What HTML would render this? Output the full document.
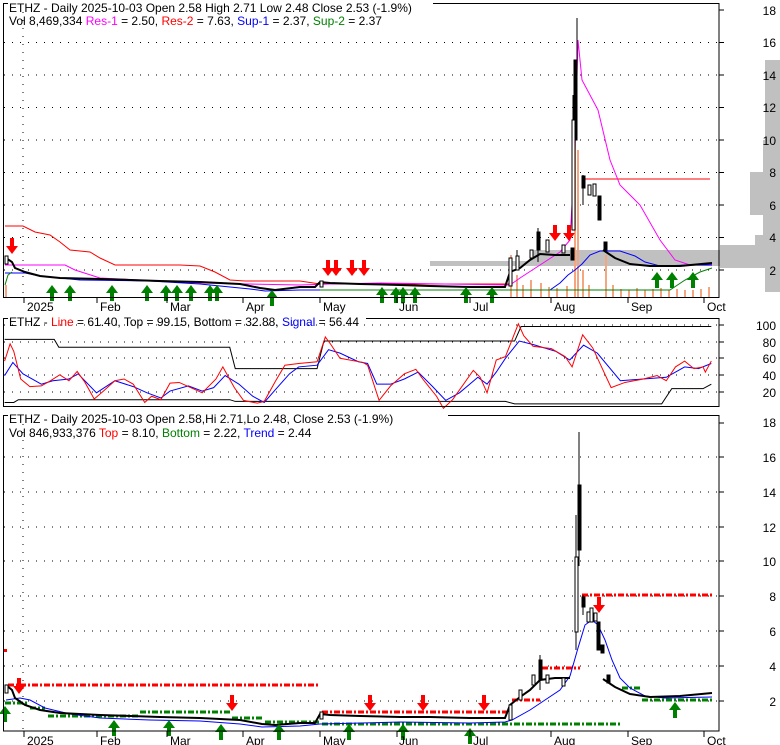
<!DOCTYPE html>
<html><head><meta charset="utf-8"><style>
html,body{margin:0;padding:0;background:#fff;}
svg{display:block;font-family:"Liberation Sans",sans-serif;font-size:12px;}
.g{stroke:#000;stroke-width:1;stroke-dasharray:1,7;fill:none}
.ns{vector-effect:non-scaling-stroke}
</style></head><body>
<svg width="780" height="745" viewBox="0 0 780 745">
<path fill="#c0c0c0" d="M765,60 H780 V292 H765 V268 H720 V245 H755 V235 H763 V215 H750 V172 H763 V140 H765 Z"/>
<path fill="#c0c0c0" d="M530,250 H720 V266 H530 Z"/>
<path fill="#c0c0c0" d="M430,261 H530 V266 H430 Z"/>
<g class="g">
<path d="M4,270H719M4,237.5H719M4,205H719M4,172.5H719M4,140H719M4,107.5H719M4,75H719M4,42.5H719"/>
<path d="M23,4V297"/>
</g>
<g fill="#f4a582">
<rect x="5" y="285" width="2" height="12"/><rect x="510" y="255" width="2" height="42"/><rect x="516" y="275" width="2" height="22"/><rect x="522" y="285" width="2" height="12"/>
<rect x="530" y="280" width="2" height="17"/><rect x="540" y="283" width="2" height="14"/><rect x="548" y="287" width="2" height="10"/><rect x="556" y="288" width="2" height="9"/>
<rect x="566" y="286" width="2" height="11"/><rect x="574" y="60" width="2" height="237"/><rect x="577" y="150" width="2" height="147"/><rect x="582" y="270" width="2" height="27"/>
<rect x="588" y="285" width="2" height="12"/><rect x="605" y="255" width="2" height="42"/><rect x="612" y="285" width="2" height="12"/>
<path d="M620,289h2v8h-2zM628,290h2v7h-2zM636,288h2v9h-2zM644,290h2v7h-2zM652,289h2v8h-2zM660,288h2v9h-2zM668,290h2v7h-2zM676,289h2v8h-2zM684,290h2v7h-2zM692,290h2v7h-2zM700,289h2v8h-2zM708,287h2v10h-2z"/>
</g>
<polyline fill="none" stroke="#f00" points="5,226 23,226 35,232 50,235 60,242 70,250 90,252 100,258 115,265 140,265 180,265 200,266 215,272 230,280 245,281 300,281 320,284 510,284"/>
<polyline fill="none" stroke="#f00" points="584,179 710,179"/>
<polyline fill="none" stroke="#f0f" points="5,265 65,265 75,270 100,278 200,283 300,285 330,284 380,283 510,285 520,278 540,265 560,252 570,240 575,150 578,40 582,80 590,95 598,110 610,160 620,185 640,205 660,240 675,260 690,265 712,264"/>
<polyline fill="none" stroke="#00f" points="5,273 25,273 40,276 80,280 150,281 200,284 250,289 265,291 300,290 510,290 550,290 560,283 568,275 575,270 582,264 590,255 600,251 620,251 635,256 645,262 660,266 690,265 712,265"/>
<polyline fill="none" stroke="#008000" points="5,285 8,275 12,272"/>
<polyline fill="none" stroke="#008000" points="320,290 470,290 540,290 670,290 685,280 700,272 712,268"/>
<polyline fill="none" stroke="#000" stroke-width="2" points="6,258 12,262 15,268 25,272 40,276 60,278 100,279 160,281 200,282 240,284 260,288 275,290 300,287 315,287 320,282 330,283 360,284 400,285 430,286 470,287 505,287 510,272 520,268 530,260 540,254 555,255 570,255"/>
<polyline fill="none" stroke="#000" stroke-width="2" points="603,250 615,258 630,264 650,266 680,266 712,263"/>
<g stroke="#000" fill="#fff">
<line x1="577" y1="18" x2="577" y2="140"/><rect x="574" y="60" width="3" height="80" fill="#000"/>
<line x1="573" y1="95" x2="573" y2="230"/><rect x="572" y="120" width="3" height="110"/>
<line x1="583" y1="175" x2="583" y2="205"/><rect x="582" y="176" width="3" height="12" fill="#000"/>
<rect x="588" y="185" width="3" height="10"/><rect x="593" y="184" width="3" height="12"/>
<rect x="598" y="196" width="3" height="24" fill="#000"/>
<line x1="538" y1="228" x2="538" y2="262"/><rect x="537" y="232" width="3" height="18" fill="#000"/>
<rect x="530" y="250" width="3" height="8"/><rect x="546" y="240" width="3" height="12"/><rect x="562" y="245" width="3" height="8"/><rect x="571" y="248" width="3" height="12" fill="#000"/>
<line x1="517" y1="250" x2="517" y2="270"/><rect x="516" y="256" width="3" height="14"/>
<rect x="509" y="258" width="3" height="28"/>
<rect x="604" y="242" width="3" height="8" fill="#000"/>
<rect x="5" y="256" width="3" height="8"/><rect x="320" y="281" width="3" height="6"/>
</g>
<g fill="#f00">
<path d="M10,238h4v8h4l-6,8l-6,-8h4z"/>
<path d="M326,260h4v8h4l-6,8l-6,-8h4z"/><path d="M334,260h4v8h4l-6,8l-6,-8h4z"/><path d="M350,260h4v8h4l-6,8l-6,-8h4z"/><path d="M362,260h4v8h4l-6,8l-6,-8h4z"/>
<path d="M553,225h4v8h4l-6,8l-6,-8h4z"/><path d="M567,225h4v8h4l-6,8l-6,-8h4z"/>
</g>
<g fill="#008000">
<path d="M52,285l6,8h-4v8h-4v-8h-4z"/>
<path d="M70,285l6,8h-4v8h-4v-8h-4z"/><path d="M112,285l6,8h-4v8h-4v-8h-4z"/><path d="M147,285l6,8h-4v8h-4v-8h-4z"/>
<path d="M166,285l6,8h-4v8h-4v-8h-4z"/><path d="M177,285l6,8h-4v8h-4v-8h-4z"/><path d="M191,285l6,8h-4v8h-4v-8h-4z"/>
<path d="M210,285l6,8h-4v8h-4v-8h-4z"/><path d="M217,285l6,8h-4v8h-4v-8h-4z"/><path d="M272,290l6,8h-4v8h-4v-8h-4z"/>
<path d="M382,287l6,8h-4v8h-4v-8h-4z"/><path d="M396,287l6,8h-4v8h-4v-8h-4z"/><path d="M403,287l6,8h-4v8h-4v-8h-4z"/><path d="M415,287l6,8h-4v8h-4v-8h-4z"/>
<path d="M466,287l6,8h-4v8h-4v-8h-4z"/><path d="M492,287l6,8h-4v8h-4v-8h-4z"/>
<path d="M657,272l6,8h-4v8h-4v-8h-4z"/><path d="M672,272l6,8h-4v8h-4v-8h-4z"/><path d="M693,272l6,8h-4v8h-4v-8h-4z"/>
</g>
<rect x="3.5" y="3.5" width="715.5" height="294" fill="none" stroke="#000"/>
<rect x="8" y="0" width="425" height="10" fill="#fff"/>
<text x="9" y="12">ETHZ - Daily 2025-10-03 Open 2.58  High 2.71  Low 2.48  Close 2.53 (-1.9%)</text>
<text x="9" y="25">Vol 8,469,334 <tspan fill="#f0f">Res-1</tspan> = 2.50, <tspan fill="#f00">Res-2</tspan> = 7.63, <tspan fill="#00f">Sup-1</tspan> = 2.37, <tspan fill="#008000">Sup-2</tspan> = 2.37</text>
<g stroke="#000"><path d="M719,270h5M719,237.5h5M719,205h5M719,172.5h5M719,140h5M719,107.5h5M719,75h5M719,42.5h5M719,10h5"/>
<path d="M24,297v6M97,297v6M167,297v6M243,297v6M320,297v6M397,297v6M470,297v6M551,297v6M628,297v6M704,297v6"/></g>
<g fill="#000">
<text x="27" y="311">2025</text><text x="100" y="311">Feb</text><text x="170" y="311">Mar</text><text x="246" y="311">Apr</text><text x="323" y="311">May</text><text x="399" y="311">Jun</text><text x="473" y="311">Jul</text><text x="554" y="311">Aug</text><text x="631" y="311">Sep</text><text x="707" y="311">Oct</text>
</g>
<g fill="#000" text-anchor="end">
<text x="776" y="15">18</text><text x="776" y="47">16</text><text x="776" y="80">14</text><text x="776" y="112">12</text><text x="776" y="145">10</text><text x="776" y="177">8</text><text x="776" y="210">6</text><text x="776" y="242">4</text><text x="776" y="275">2</text>
</g>
<g class="g"><path d="M4,392H719M4,375H719M4,358H719M4,342H719M4,325H719"/></g>
<g transform="translate(0,310) scale(0.4595,0.345)" fill="none">
<polyline class="ns" stroke="#000" points="10,85 118,85 128,108 500,108 512,170 690,170 705,90 1120,90 1134,48 1548,48"/>
<polyline class="ns" stroke="#000" points="10,268 30,268 40,260 500,260 512,265 1100,265 1120,272 1440,272 1462,228 1530,228 1548,215"/>
<polyline class="ns" stroke="#00f" points="10,190 28,152 50,185 90,215 115,205 150,200 170,185 210,240 250,205 290,222 320,240 350,255 370,235 410,220 440,235 465,225 490,190 520,215 550,250 575,268 600,230 630,185 650,165 690,160 715,115 740,125 780,150 800,155 820,215 850,215 880,200 910,180 940,220 970,262 1000,240 1040,195 1060,215 1080,180 1100,140 1130,90 1160,100 1210,120 1240,145 1270,102 1300,125 1350,205 1400,200 1450,195 1490,165 1520,170 1548,155"/>
<polyline class="ns" stroke="#f00" points="10,148 22,98 30,120 45,200 65,222 90,220 110,205 130,188 150,205 168,178 185,210 205,258 225,235 250,205 270,200 290,215 315,268 330,250 350,260 370,212 390,210 410,222 440,240 470,200 485,165 510,225 530,262 560,270 575,265 600,205 620,160 650,155 690,150 708,78 720,100 740,140 790,152 800,160 825,262 850,220 880,185 905,172 920,200 950,250 965,285 985,260 1030,175 1045,195 1060,240 1080,145 1100,135 1128,40 1140,75 1160,105 1200,112 1230,135 1245,165 1268,72 1290,110 1330,225 1360,210 1400,200 1430,190 1450,205 1470,165 1490,148 1510,170 1530,165 1535,180 1548,148"/>
</g>
<rect x="3.5" y="318.5" width="715.5" height="88" fill="none" stroke="#000"/>
<rect x="8" y="314" width="358" height="10" fill="#fff"/>
<text x="9" y="326">ETHZ - <tspan fill="#f00">Line</tspan> = 61.40, Top = 99.15, Bottom = 32.88, <tspan fill="#00f">Signal</tspan> = 56.44</text>
<g stroke="#000"><path d="M719,392h5M719,375h5M719,358h5M719,342h5M719,325h5"/></g>
<g fill="#000" text-anchor="end"><text x="776" y="330">100</text><text x="776" y="347">80</text><text x="776" y="363">60</text><text x="776" y="380">40</text><text x="776" y="397">20</text></g>
<g class="g">
<path d="M4,701H719M4,666H719M4,631H719M4,596H719M4,561H719M4,527H719M4,492H719M4,457H719"/>
<path d="M23,416V731"/>
</g>
<g fill="none" stroke-width="3" stroke-dasharray="6,2,2,2">
<path stroke="#f00" d="M8,685H320M322,712H510M512,700H540M542,668H580M582,595H712"/>
<path stroke="#008000" d="M5,703H28M30,708H45M48,716H140M140,712H230M232,718H262M265,722H320M322,724H620M622,688H640M642,700H712"/>
</g>
<rect x="4" y="649" width="3" height="3" fill="#f00"/>
<polyline fill="none" stroke="#00f" points="6,700 20,698 30,700 45,708 70,714 100,718 150,720 200,721 240,724 262,727 300,726 320,724 400,722 470,723 505,722 512,720 530,710 545,700 560,690 570,676 578,648 585,625 592,620 598,625 605,640 612,660 620,678 630,688 645,696 665,698 712,697"/>
<polyline fill="none" stroke="#000" stroke-width="2" points="6,685 12,690 15,698 25,705 40,710 60,713 100,715 160,717 200,718 240,720 262,724 275,725 300,723 315,723 320,714 330,715 360,716 400,717 430,717 470,718 505,718 510,705 520,697 530,690 540,680 555,678 570,678"/>
<polyline fill="none" stroke="#000" stroke-width="2" points="603,679 615,687 630,694 650,697 680,696 712,693"/>
<g stroke="#000" fill="#fff">
<line x1="579" y1="432" x2="579" y2="566"/><rect x="578" y="485" width="3" height="65" fill="#000"/>
<line x1="576" y1="515" x2="576" y2="650"/><rect x="575" y="557" width="3" height="75"/>
<line x1="583" y1="595" x2="583" y2="615"/><rect x="582" y="597" width="3" height="10" fill="#000"/>
<rect x="587" y="612" width="3" height="10"/><rect x="590" y="608" width="3" height="14"/><rect x="594" y="613" width="3" height="8"/>
<rect x="597" y="622" width="3" height="28" fill="#000"/><rect x="601" y="645" width="3" height="8" fill="#000"/>
<line x1="540" y1="655" x2="540" y2="690"/><rect x="539" y="660" width="3" height="20" fill="#000"/>
<rect x="532" y="675" width="3" height="10"/><rect x="546" y="675" width="3" height="8"/><rect x="562" y="678" width="3" height="8"/>
<rect x="509" y="705" width="3" height="15"/><rect x="519" y="690" width="3" height="10"/>
<rect x="607" y="675" width="3" height="8" fill="#000"/>
<rect x="5" y="685" width="3" height="8"/><rect x="320" y="712" width="3" height="7"/>
</g>
<g fill="#f00">
<path d="M17,678h4v8h4l-6,8l-6,-8h4z"/><path d="M230,695h4v8h4l-6,8l-6,-8h4z"/><path d="M368,695h4v8h4l-6,8l-6,-8h4z"/><path d="M421,695h4v8h4l-6,8l-6,-8h4z"/><path d="M482,695h4v8h4l-6,8l-6,-8h4z"/><path d="M597,597h4v8h4l-6,8l-6,-8h4z"/>
</g>
<g fill="#008000">
<path d="M5,706l6,8h-4v8h-4v-8h-4z"/><path d="M114,720l6,8h-4v8h-4v-8h-4z"/><path d="M169,720l6,8h-4v8h-4v-8h-4z"/><path d="M221,724l6,8h-4v8h-4v-8h-4z"/><path d="M279,724l6,8h-4v8h-4v-8h-4z"/><path d="M349,724l6,8h-4v8h-4v-8h-4z"/><path d="M403,724l6,8h-4v8h-4v-8h-4z"/><path d="M470,728l6,8h-4v8h-4v-8h-4z"/><path d="M675,702l6,8h-4v8h-4v-8h-4z"/>
</g>
<rect x="3.5" y="415.5" width="715.5" height="315.5" fill="none" stroke="#000"/>
<rect x="8" y="411" width="440" height="10" fill="#fff"/>
<text x="9" y="423">ETHZ - Daily 2025-10-03 Open 2.58,Hi 2.71,Lo 2.48, Close 2.53 (-1.9%)</text>
<text x="9" y="437">Vol 846,933,376 <tspan fill="#f00">Top</tspan> = 8.10, <tspan fill="#008000">Bottom</tspan> = 2.22, <tspan fill="#00f">Trend</tspan> = 2.44</text>
<g stroke="#000"><path d="M719,701h5M719,666h5M719,631h5M719,596h5M719,561h5M719,527h5M719,492h5M719,457h5M719,423h5"/>
<path d="M24,731v6M97,731v6M167,731v6M243,731v6M320,731v6M397,731v6M470,731v6M551,731v6M628,731v6M704,731v6"/></g>
<g fill="#000">
<text x="27" y="745">2025</text><text x="100" y="745">Feb</text><text x="170" y="745">Mar</text><text x="246" y="745">Apr</text><text x="323" y="745">May</text><text x="399" y="745">Jun</text><text x="473" y="745">Jul</text><text x="554" y="745">Aug</text><text x="631" y="745">Sep</text><text x="707" y="745">Oct</text>
</g>
<g fill="#000" text-anchor="end">
<text x="776" y="427">18</text><text x="776" y="462">16</text><text x="776" y="497">14</text><text x="776" y="532">12</text><text x="776" y="566">10</text><text x="776" y="601">8</text><text x="776" y="636">6</text><text x="776" y="671">4</text><text x="776" y="706">2</text>
</g>
</svg>
</body></html>
